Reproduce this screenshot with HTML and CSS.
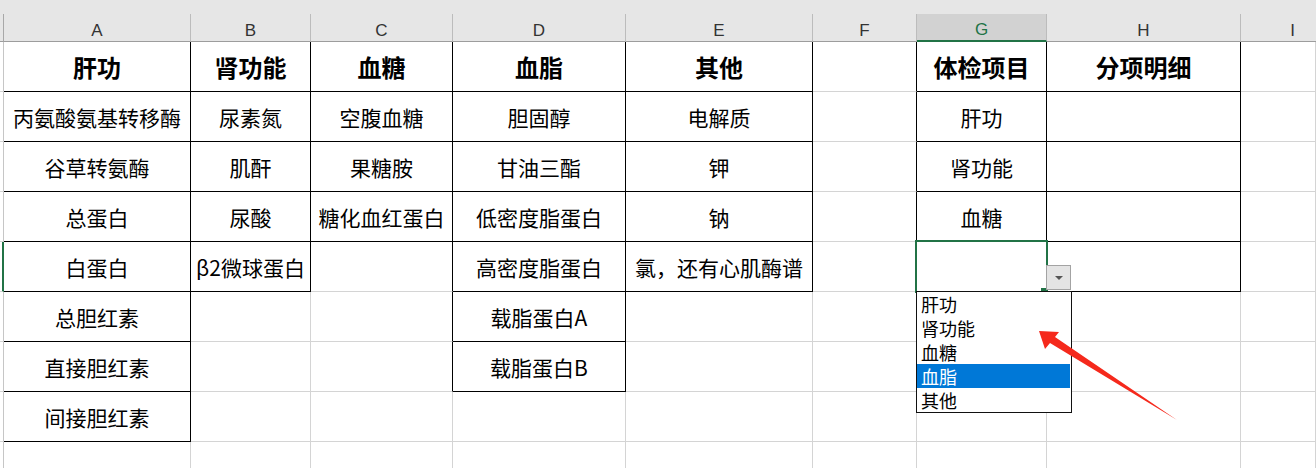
FILE: index.html
```html
<!DOCTYPE html>
<html lang="zh-CN">
<head>
<meta charset="utf-8">
<title>体检项目</title>
<link rel="stylesheet" href="styles.css">
</head>
<body>
<div class="strip"></div>
<div class="sheet">
  <div class="ch corner"></div>
  <div class="ch">A</div>
  <div class="ch">B</div>
  <div class="ch">C</div>
  <div class="ch">D</div>
  <div class="ch">E</div>
  <div class="ch">F</div>
  <div class="ch sel">G</div>
  <div class="ch">H</div>
  <div class="ch edge">I</div>

  <!-- row 1 -->
  <div class="rh"></div>
  <div class="c r b h">肝功</div>
  <div class="c r b h">肾功能</div>
  <div class="c r b h">血糖</div>
  <div class="c r b h">血脂</div>
  <div class="c r b h">其他</div>
  <div class="c r"></div>
  <div class="c r b h">体检项目</div>
  <div class="c r b h">分项明细</div>
  <div class="c"></div>

  <!-- row 2 -->
  <div class="rh"></div>
  <div class="c r b">丙氨酸氨基转移酶</div>
  <div class="c r b">尿素氮</div>
  <div class="c r b">空腹血糖</div>
  <div class="c r b">胆固醇</div>
  <div class="c r b">电解质</div>
  <div class="c r"></div>
  <div class="c r b">肝功</div>
  <div class="c r b"></div>
  <div class="c"></div>

  <!-- row 3 -->
  <div class="rh"></div>
  <div class="c r b">谷草转氨酶</div>
  <div class="c r b">肌酐</div>
  <div class="c r b">果糖胺</div>
  <div class="c r b">甘油三酯</div>
  <div class="c r b">钾</div>
  <div class="c r"></div>
  <div class="c r b">肾功能</div>
  <div class="c r b"></div>
  <div class="c"></div>

  <!-- row 4 -->
  <div class="rh"></div>
  <div class="c r b">总蛋白</div>
  <div class="c r b">尿酸</div>
  <div class="c r b">糖化血红蛋白</div>
  <div class="c r b">低密度脂蛋白</div>
  <div class="c r b">钠</div>
  <div class="c r"></div>
  <div class="c r b">血糖</div>
  <div class="c r b"></div>
  <div class="c"></div>

  <!-- row 5 -->
  <div class="rh active"></div>
  <div class="c r b">白蛋白</div>
  <div class="c r b">β2微球蛋白</div>
  <div class="c r"></div>
  <div class="c r b">高密度脂蛋白</div>
  <div class="c r b">氯，还有心肌酶谱</div>
  <div class="c r"></div>
  <div class="c r b cur">
    <div class="selbox"></div>
    <div class="handle"></div>
    <div class="ddbtn"><span class="tri"></span></div>
    <ul class="ddlist">
      <li>肝功</li>
      <li>肾功能</li>
      <li>血糖</li>
      <li class="hl">血脂</li>
      <li>其他</li>
    </ul>
  </div>
  <div class="c r b"></div>
  <div class="c"></div>

  <!-- row 6 -->
  <div class="rh"></div>
  <div class="c r b">总胆红素</div>
  <div class="c"></div>
  <div class="c r"></div>
  <div class="c r b">载脂蛋白A</div>
  <div class="c"></div>
  <div class="c"></div>
  <div class="c"></div>
  <div class="c"></div>
  <div class="c"></div>

  <!-- row 7 -->
  <div class="rh"></div>
  <div class="c r b">直接胆红素</div>
  <div class="c"></div>
  <div class="c r"></div>
  <div class="c r b">载脂蛋白B</div>
  <div class="c"></div>
  <div class="c"></div>
  <div class="c"></div>
  <div class="c"></div>
  <div class="c"></div>

  <!-- row 8 -->
  <div class="rh"></div>
  <div class="c r b">间接胆红素</div>
  <div class="c"></div>
  <div class="c"></div>
  <div class="c"></div>
  <div class="c"></div>
  <div class="c"></div>
  <div class="c"></div>
  <div class="c"></div>
  <div class="c"></div>

  <!-- row 9 (partially visible) -->
  <div class="rh last"></div>
  <div class="c last"></div>
  <div class="c last"></div>
  <div class="c last"></div>
  <div class="c last"></div>
  <div class="c last"></div>
  <div class="c last"></div>
  <div class="c last"></div>
  <div class="c last"></div>
  <div class="c last"></div>
</div>

<svg class="arrow" width="1316" height="468" viewBox="0 0 1316 468" xmlns="http://www.w3.org/2000/svg">
  <polygon points="1039,331 1059,332 1055,337 1177,420 1050,343 1045,349" fill="#f5291c"/>
</svg>
</body>
</html>
```

FILE: styles.css
```css
* { box-sizing: border-box; }

html, body {
  margin: 0;
  padding: 0;
  background: #ffffff;
  overflow: hidden;
  width: 1316px;
  height: 468px;
}

body {
  position: relative;
  font-family: "Noto Sans CJK SC", "Noto Sans", sans-serif;
  color: #000;
}

.strip {
  height: 14px;
  background: #e6e6e6;
}

.sheet {
  display: grid;
  grid-template-columns: 4px 187px 120px 142px 173px 187px 104px 130px 194px 75px;
  grid-template-rows: 28px repeat(8, 50px) 26px;
  width: 1316px;
  overflow: hidden;
}

.ch {
  background: #e6e6e6;
  border-right: 1px solid #bcbcbc;
  border-bottom: 1px solid #9d9d9d;
  display: flex;
  align-items: center;
  justify-content: center;
  padding-top: 6px;
  font-family: "Liberation Sans", Arial, sans-serif;
  font-size: 17px;
  color: #333;
}

.ch.edge {
  border-right: none;
  justify-content: flex-end;
  padding-right: 21px;
}

.ch.corner {
  border-right-color: #a8a8a8;
}

.ch.sel {
  background: #d2d2d2;
  color: #217346;
  border-bottom: 2px solid #217346;
}

.rh {
  border-right: 1px solid #c6c6c6;
  border-bottom: 1px solid #d4d4d4;
}

.rh.active {
  border-right: 2px solid #217346;
}

.c {
  border-right: 1px solid #d4d4d4;
  border-bottom: 1px solid #d4d4d4;
  display: flex;
  align-items: center;
  justify-content: center;
  font-size: 21px;
  white-space: nowrap;
}

.c.r { border-right-color: #000; }
.c.b { border-bottom-color: #000; }

.last { border-bottom: none; }

.c.h {
  font-size: 24px;
  font-weight: bold;
}

.cur {
  position: relative;
  z-index: 2;
}

.selbox {
  position: absolute;
  left: -2px;
  top: -2px;
  width: 133px;
  height: 53px;
  border: 2px solid #217346;
}

.handle {
  position: absolute;
  left: 124px;
  top: 46px;
  width: 6px;
  height: 5px;
  background: #217346;
}

.ddbtn {
  position: absolute;
  left: 129px;
  top: 23px;
  width: 25px;
  height: 25px;
  background: #e4e4e4;
  border: 1px solid #a3a3a3;
  display: flex;
  align-items: center;
  justify-content: center;
}

.tri {
  width: 0;
  height: 0;
  border-left: 4px solid transparent;
  border-right: 4px solid transparent;
  border-top: 4px solid #555;
  margin-top: 1px;
}

.ddlist {
  position: absolute;
  left: -1px;
  top: 49px;
  width: 156px;
  margin: 0;
  padding: 0 1px 0 0;
  list-style: none;
  background: #fff;
  border: 1px solid #111;
}

.ddlist li {
  height: 24px;
  line-height: 24px;
  padding-left: 4px;
  font-size: 18px;
  color: #000;
}

.ddlist li.hl {
  background: #0078d7;
  color: #fff;
}

.arrow {
  position: absolute;
  left: 0;
  top: 0;
  pointer-events: none;
  z-index: 5;
}
```
